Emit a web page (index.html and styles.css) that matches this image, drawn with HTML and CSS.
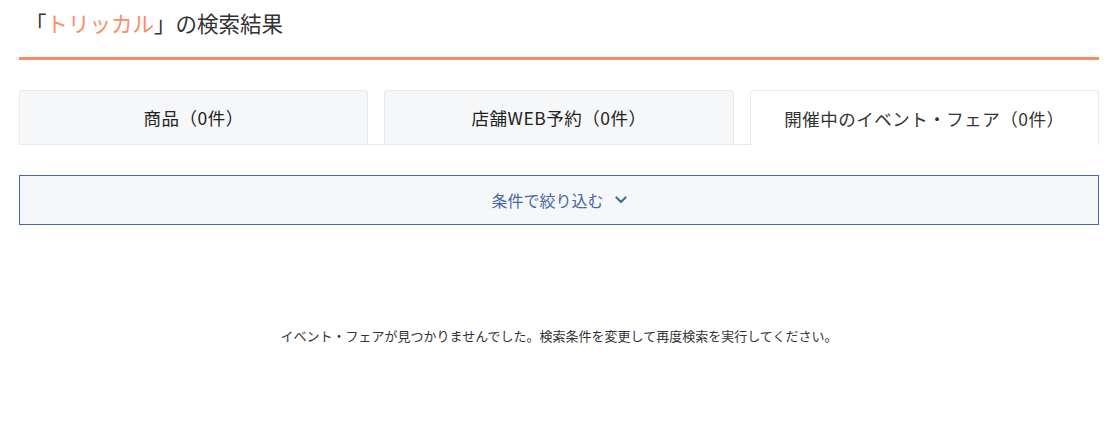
FILE: index.html
```html
<!DOCTYPE html>
<html lang="ja">
<head>
    <meta charset="UTF-8">
    <meta name="viewport" content="width=device-width, initial-scale=1.0">
    <title>検索結果</title>
    <link rel="stylesheet" href="styles.css">
</head>
<body>
    <div class="page">
        <h1 class="result-title">「<span class="keyword">トリッカル</span>」の検索結果</h1>

        <div class="tabs">
            <a href="#" class="tab">商品（0件）</a>
            <a href="#" class="tab">店舗WEB予約（0件）</a>
            <a href="#" class="tab active">開催中のイベント・フェア（0件）</a>
        </div>

        <button class="filter-toggle" type="button">
            条件で絞り込む
            <svg class="chevron" width="12" height="8" viewBox="0 0 12 8">
                <path d="M1.5 1.5 L6 6 L10.5 1.5" fill="none" stroke="#4a68a6" stroke-width="2.2" stroke-linecap="round" stroke-linejoin="round"/>
            </svg>
        </button>

        <p class="empty-message">イベント・フェアが見つかりませんでした。検索条件を変更して再度検索を実行してください。</p>
    </div>
</body>
</html>
```

FILE: styles.css
```css
body {
    font-family: "Noto Sans CJK JP", "Noto Sans", sans-serif;
    background-color: #fff;
    color: #333;
    margin: 0;
}
.page {
    padding: 0 14px 0 19px;
}
.result-title {
    margin: 0;
    padding: 7px 0 18px 6px;
    font-size: 21.5px;
    line-height: 32px;
    font-weight: normal;
    color: #333;
    border-bottom: 3px solid #fd8a5e;
}
.keyword {
    color: #f98d64;
}
.tabs {
    display: flex;
    gap: 16px;
    margin-top: 30px;
    border-bottom: 1px solid #e6e8eb;
}
.tab {
    flex: 1;
    display: flex;
    align-items: center;
    justify-content: center;
    height: 53px;
    margin-bottom: -1px;
    background-color: #f6f7f9;
    border: 1px solid #e6e8eb;
    border-bottom: none;
    border-radius: 4px 4px 0 0;
    color: #222;
    font-size: 17.5px;
    letter-spacing: 0.5px;
    text-decoration: none;
}
.tab.active {
    background-color: #fff;
    height: 54px;
    color: #333;
}
.filter-toggle {
    display: flex;
    align-items: center;
    justify-content: center;
    gap: 11px;
    width: 100%;
    height: 50px;
    margin-top: 30px;
    background-color: #f6f7f9;
    border: 1px solid #4a68a6;
    color: #4a68a6;
    font-family: inherit;
    font-size: 16px;
    cursor: pointer;
}
.chevron {
    display: block;
}
.empty-message {
    margin: 101px 0 0;
    text-align: center;
    font-size: 13px;
    line-height: 20px;
    color: #333;
}
```
